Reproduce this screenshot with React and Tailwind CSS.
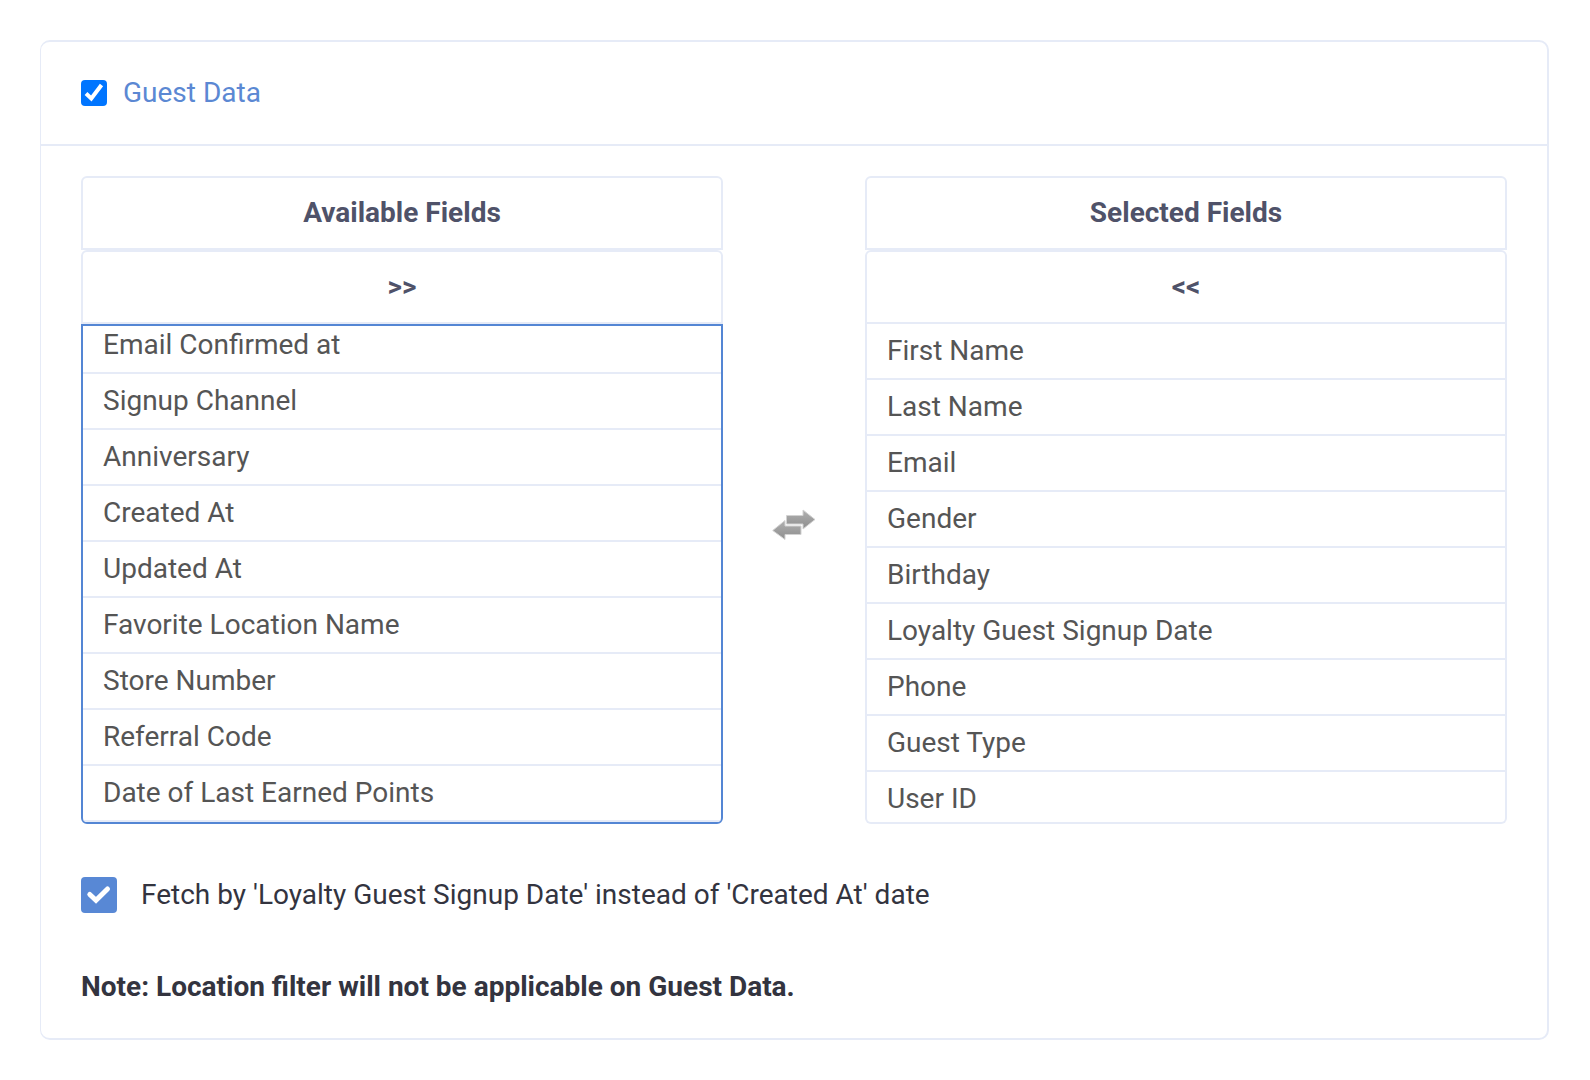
import { useLayoutEffect, useRef } from "react";

const available = [
  "Email Confirmed at",
  "Signup Channel",
  "Anniversary",
  "Created At",
  "Updated At",
  "Favorite Location Name",
  "Store Number",
  "Referral Code",
  "Date of Last Earned Points",
];

const selected = [
  "First Name",
  "Last Name",
  "Email",
  "Gender",
  "Birthday",
  "Loyalty Guest Signup Date",
  "Phone",
  "Guest Type",
  "User ID",
];

function FieldList({ id, title, move, moveLabel, fields, active }) {
  const ref = useRef(null);
  useLayoutEffect(() => {
    if (active && ref.current) ref.current.scrollTop = ref.current.scrollHeight;
  }, [active]);

  return (
    <section className="flex min-w-0 flex-col">
      <label
        htmlFor={id}
        className="flex h-[74px] items-center justify-center rounded-t-md border-2 border-[#e6ebf7] font-bold text-[#4f5269]"
      >
        {title}
      </label>
      <button
        type="button"
        aria-label={moveLabel}
        className="h-[74px] rounded-t-md border-2 border-[#e6ebf7] font-bold text-[#4f5269]"
      >
        {move}
      </button>
      <select
        ref={ref}
        id={id}
        multiple
        className={
          active
            ? "h-[500px] w-full appearance-none overflow-y-auto rounded-b-md border-2 border-[#5486d4] p-0 text-[#555555] outline-none [scrollbar-width:none]"
            : "h-[500px] w-full appearance-none overflow-y-auto rounded-b-md border-2 border-t-0 border-[#e6ebf7] p-0 text-[#555555] outline-none [scrollbar-width:none]"
        }
      >
        {fields.map((f) => (
          <option
            key={f}
            className="block h-14 border-b-2 border-[#e6ebf7] px-5 pt-2.5 pb-0"
          >
            {f}
          </option>
        ))}
      </select>
    </section>
  );
}

function SwapIcon() {
  return (
    <svg width="44" height="32" viewBox="0 0 44 32" aria-hidden="true">
      <defs>
        <linearGradient id="swap-shade" x1="0" y1="0" x2="0" y2="1">
          <stop offset="0" stopColor="#b0b0b0" />
          <stop offset="1" stopColor="#8e8e8e" />
        </linearGradient>
      </defs>
      <g fill="url(#swap-shade)" stroke="#d2d2d2" strokeWidth="1">
        <path d="M14.500 6.500H31V1L43 10.500L31 20V15H14.500Z" />
        <path d="M29 17H13V11.500L0.700 21.500L13 30.500V25.500H29Z" />
      </g>
    </svg>
  );
}

export default function App() {
  return (
    <main className="bg-white py-10 pr-[41px] pl-10 font-['Roboto',sans-serif] text-[28px] leading-9">
      <div className="rounded-[10px] border-2 border-l border-[#e6ebf7]">
        <header className="flex h-[104px] items-center border-b-2 border-[#e6ebf7] px-10">
          <label className="flex items-center gap-4 text-[#5b88d3]">
            <span className="grid">
              <input
                type="checkbox"
                defaultChecked
                className="col-start-1 row-start-1 size-[26px] appearance-none rounded bg-white ring-1 ring-inset ring-gray-400 checked:bg-[#0075ff] checked:ring-0"
              />
              <svg
                viewBox="0 0 26 26"
                aria-hidden="true"
                className="pointer-events-none col-start-1 row-start-1 size-[26px]"
              >
                <path
                  d="M5 13.500L10.300 18.500L20.500 5"
                  fill="none"
                  stroke="white"
                  strokeWidth="4"
                />
              </svg>
            </span>
            Guest Data
          </label>
        </header>

        <div className="px-10 pt-[30px] pb-[33px]">
          <div className="grid grid-cols-[1fr_142px_1fr]">
            <FieldList
              id="available-fields"
              title="Available Fields"
              move=">>"
              moveLabel="Add all fields"
              fields={available}
              active
            />
            <div className="flex justify-center pt-[333px]">
              <SwapIcon />
            </div>
            <FieldList
              id="selected-fields"
              title="Selected Fields"
              move="<<"
              moveLabel="Remove all fields"
              fields={selected}
            />
          </div>

          <label className="mt-[53px] flex items-center gap-6 text-[#33343f]">
            <span className="grid">
              <input
                type="checkbox"
                defaultChecked
                className="col-start-1 row-start-1 size-9 appearance-none rounded bg-white ring-1 ring-inset ring-gray-400 checked:bg-[#5888d5] checked:ring-0"
              />
              <svg
                viewBox="0 0 36 36"
                aria-hidden="true"
                className="pointer-events-none col-start-1 row-start-1 size-9"
              >
                <path
                  d="M8.800 17.500L15 23.300L26.500 12"
                  fill="none"
                  stroke="white"
                  strokeWidth="5"
                  strokeLinecap="round"
                />
              </svg>
            </span>
            Fetch by 'Loyalty Guest Signup Date' instead of 'Created At' date
          </label>

          <p className="mt-14 font-bold text-[#33343f]">
            Note: Location filter will not be applicable on Guest Data.
          </p>
        </div>
      </div>
    </main>
  );
}
